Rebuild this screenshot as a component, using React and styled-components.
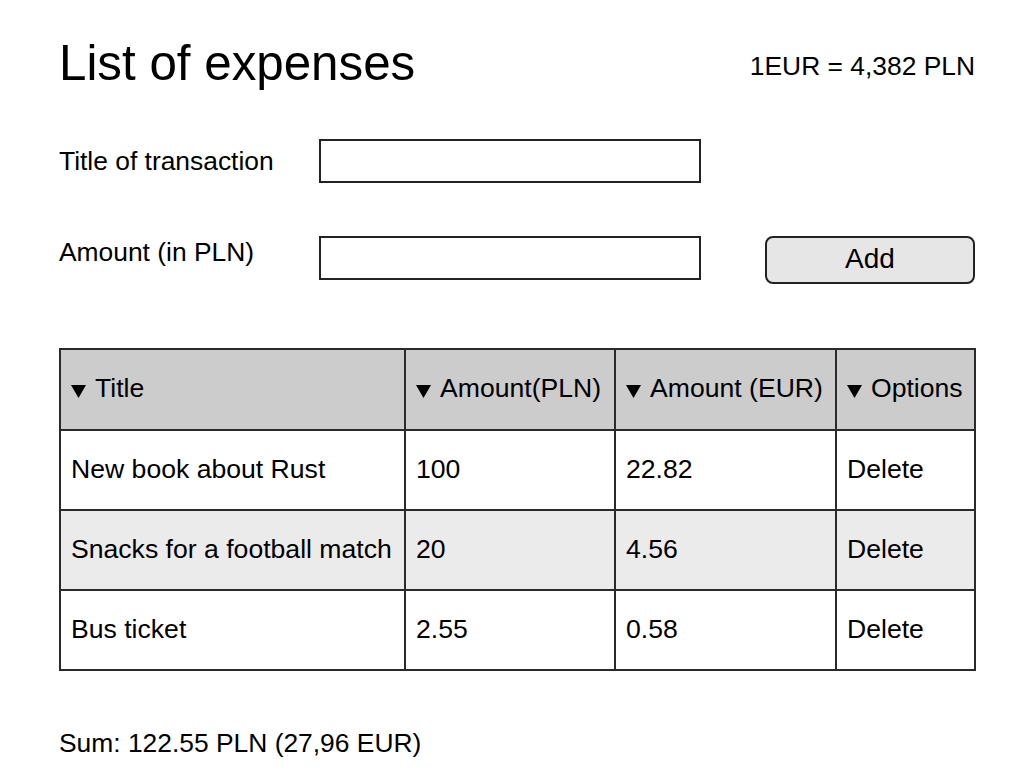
import styled, { createGlobalStyle } from "styled-components";

const GlobalStyle = createGlobalStyle`
  body {
    margin: 0;
    background: #ffffff;
    color: #000000;
    font-family: "Liberation Sans", Arial, Helvetica, sans-serif;
  }
`;

const rows = [
  { title: "New book about Rust", pln: "100", eur: "22.82" },
  { title: "Snacks for a football match", pln: "20", eur: "4.56" },
  { title: "Bus ticket", pln: "2.55", eur: "0.58" },
];

const columns = [
  { label: "Title", width: 345 },
  { label: "Amount(PLN)", width: 210 },
  { label: "Amount (EUR)", width: 221 },
  { label: "Options", width: 139 },
];

const Arrow = () => (
  <ArrowSvg width="15" height="13" viewBox="0 0 15 13">
    <polygon points="0,0 15,0 7.5,13" fill="#000" />
  </ArrowSvg>
);

const App = () => {
  return (
    <Page>
      <GlobalStyle />
      <Header>
        <Title>List of expenses</Title>
        <Rate>1EUR = 4,382 PLN</Rate>
      </Header>

      <Form>
        <FormRow>
          <Label>Title of transaction</Label>
          <Input type="text" />
        </FormRow>
        <FormRow $top={53}>
          <Label $drop={1}>Amount (in PLN)</Label>
          <Input type="text" />
          <AddButton>Add</AddButton>
        </FormRow>
      </Form>

      <Table>
        <colgroup>
          {columns.map((c) => (
            <col key={c.label} style={{ width: c.width }} />
          ))}
        </colgroup>
        <thead>
          <tr>
            {columns.map((c) => (
              <Th key={c.label}>
                <Arrow />
                {c.label}
              </Th>
            ))}
          </tr>
        </thead>
        <tbody>
          {rows.map((r, i) => (
            <Tr key={r.title} $shaded={i % 2 === 1}>
              <Td>{r.title}</Td>
              <Td>{r.pln}</Td>
              <Td>{r.eur}</Td>
              <Td>Delete</Td>
            </Tr>
          ))}
        </tbody>
      </Table>

      <Sum>Sum: 122.55 PLN (27,96 EUR)</Sum>
    </Page>
  );
};

const Page = styled.div`
  padding: 35px 0 0 59px;
  width: 916px;
  font-size: 26.4px;
`;

const Header = styled.div`
  display: flex;
  justify-content: space-between;
  align-items: flex-start;
`;

const Title = styled.h1`
  margin: 0;
  font-size: 49.3px;
  font-weight: 400;
  line-height: 56px;
`;

const Rate = styled.div`
  margin-top: 16px;
  font-size: 26.4px;
  line-height: 30px;
`;

const Form = styled.div`
  margin-top: 48px;
  display: flex;
  flex-direction: column;
`;

const FormRow = styled.div`
  display: flex;
  align-items: ${(p) => (p.$top ? "flex-start" : "center")};
  margin-top: ${(p) => p.$top || 0}px;
`;

const Label = styled.label`
  width: 260px;
  line-height: 30px;
  margin-top: ${(p) => p.$drop || 0}px;
`;

const Input = styled.input`
  box-sizing: border-box;
  width: 382px;
  height: 44px;
  border: 2px solid #222;
  border-radius: 0;
  background: #fff;
  padding: 0 8px;
  font: inherit;
`;

const AddButton = styled.button`
  box-sizing: border-box;
  margin-left: 64px;
  width: 210px;
  height: 48px;
  border: 2px solid #222;
  border-radius: 8px;
  background: #e6e6e6;
  font-family: inherit;
  font-size: 28px;
  color: #000;
  padding: 0 0 2px;
`;

const Table = styled.table`
  margin-top: 64px;
  width: 916px;
  table-layout: fixed;
  border-collapse: collapse;
  border: 2px solid #2a2a2a;
  font-size: 26.6px;
`;

const Th = styled.th`
  height: 77px;
  padding: 0 0 2px 10px;
  text-align: left;
  font-weight: 400;
  white-space: nowrap;
  background: #cccccc;
  border: 2px solid #2a2a2a;
`;

const ArrowSvg = styled.svg`
  margin-right: 9px;
  vertical-align: -1px;
`;

const Tr = styled.tr`
  background: ${(p) => (p.$shaded ? "#ebebeb" : "#ffffff")};
`;

const Td = styled.td`
  height: 76px;
  padding: 0 0 2px 10px;
  white-space: nowrap;
  border: 2px solid #2a2a2a;
`;

const Sum = styled.div`
  margin-top: 57px;
  line-height: 30px;
`;

export default App;
